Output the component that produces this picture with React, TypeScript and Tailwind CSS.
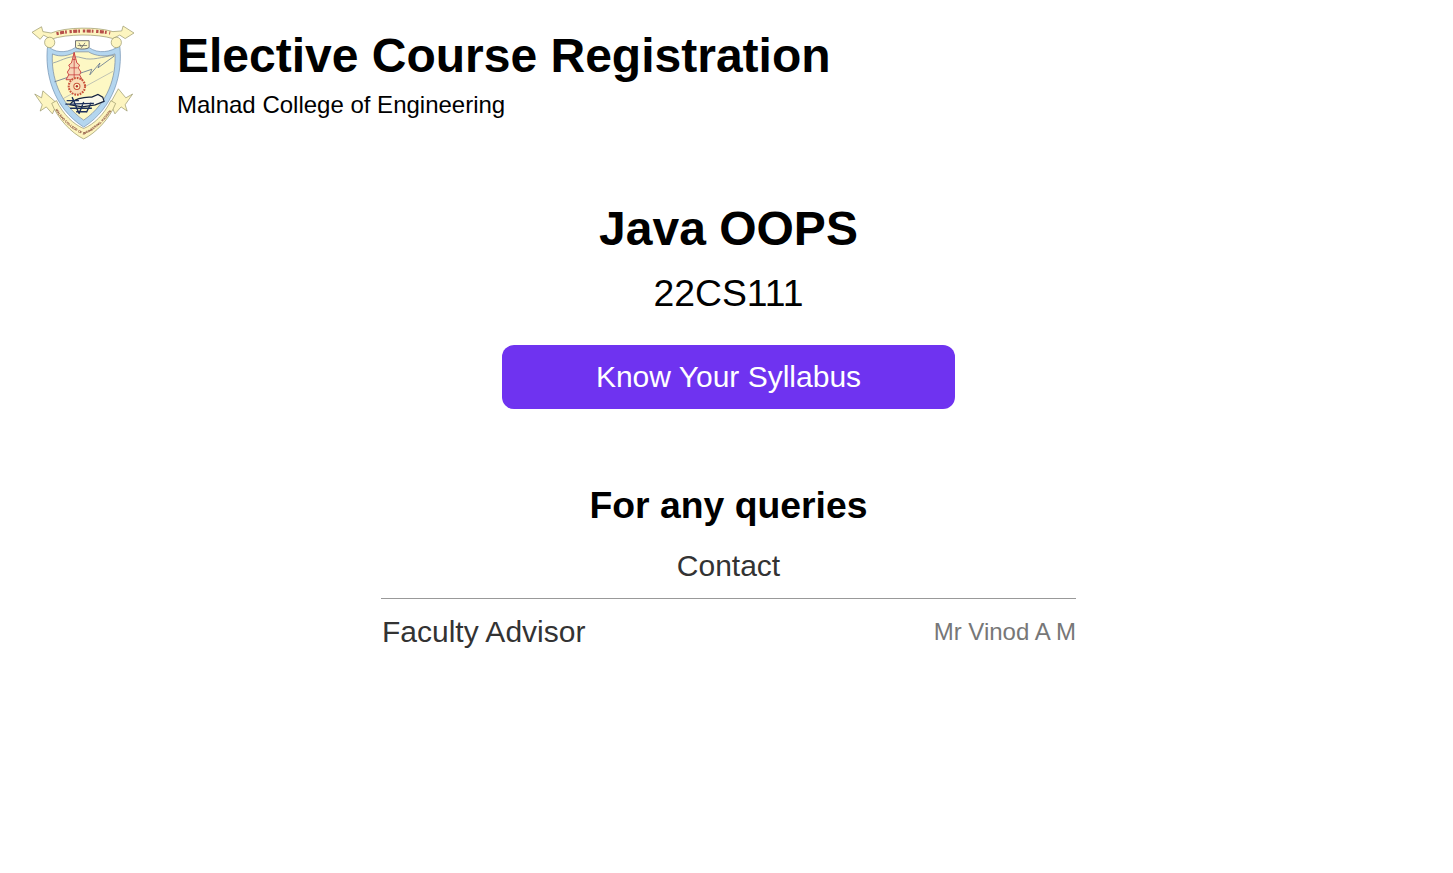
function Logo() {
  return (
    <svg width="104" height="115" viewBox="35 33 306 330" preserveAspectRatio="none" className="shrink-0">
      <defs>
        <filter id="soft" x="-5%" y="-5%" width="110%" height="110%">
          <feGaussianBlur stdDeviation="1.2" />
        </filter>
        <path id="band" d="M104 272 C125 308 160 336 190 348 C220 336 255 308 276 272" />
      </defs>
      <g filter="url(#soft)">
        {/* lower ribbon tails */}
        <path d="M46 231 L66 242 L70 222 L112 258 L98 288 L80 268 L62 280 L68 262 Z" fill="#fdf5c0" stroke="#8b8a5c" strokeWidth="1.8" />
        <path d="M334 231 L314 242 L292 216 L268 258 L282 288 L300 268 L318 280 L312 262 Z" fill="#fdf5c0" stroke="#8b8a5c" strokeWidth="1.8" />
        {/* lower ribbon */}
        <path d="M96 258 C112 300 155 344 190 360 C225 344 268 300 284 258 L270 250 C250 290 220 318 190 330 C160 318 130 290 110 250 Z" fill="#fdf5c0" stroke="#8b8a5c" strokeWidth="1.8" />
        <text fontSize="9.5" fill="#7c3a2e" fontWeight="700" fontFamily="'Liberation Sans', sans-serif">
          <textPath href="#band" startOffset="2%">MALNAD COLLEGE OF ENGINEERING, HASSAN</textPath>
        </text>
        {/* shield */}
        <path d="M84 92 C100 112 138 116 165 98 L206 98 C232 116 270 112 296 92 C306 170 280 270 190 326 C100 270 74 170 84 92 Z" fill="#b4d6ef" stroke="#6f8fb0" strokeWidth="2" />
        <path d="M98 116 C120 126 146 122 166 110 L204 110 C224 122 254 126 282 116 C286 180 262 258 190 306 C118 258 94 180 98 116 Z" fill="#fdf8c4" stroke="#76879e" strokeWidth="2" />
        {/* hills and lightning */}
        <path d="M100 142 C130 134 150 116 188 128 C215 136 245 124 280 120" fill="none" stroke="#76879e" strokeWidth="2" />
        <path d="M104 196 L190 168 L214 160 L208 176 L238 142 L232 156 L280 122" fill="none" stroke="#64778f" strokeWidth="2.4" />
        <path d="M130 244 L276 166" fill="none" stroke="#8f98a4" strokeWidth="1.6" />
        {/* pylon */}
        <path d="M162 112 L154 142 L146 148 L150 156 L142 168 L146 176 L138 190 L186 190 L178 176 L182 168 L174 156 L178 148 L170 142 Z" fill="#f6d3b6" stroke="#c93b3b" strokeWidth="2.6" />
        <path d="M152 156 H172 M146 176 H178 M158 132 H166 M162 112 V190" stroke="#c93b3b" strokeWidth="2.2" />
        {/* gear */}
        <circle cx="170" cy="209" r="24" fill="#f9dfb8" stroke="#c9533b" strokeWidth="6" strokeDasharray="5 3" />
        <circle cx="170" cy="209" r="9" fill="#fdf8c4" stroke="#c9533b" strokeWidth="3" />
        <circle cx="170" cy="209" r="3.5" fill="#b32f2f" />
        {/* book */}
        <path d="M150 262 C158 246 190 238 214 240 L232 232 L246 240 L250 252 L224 262 L186 268 Z" fill="#fbf9ea" stroke="#15233f" strokeWidth="3.6" />
        <path d="M140 250 L176 250 M136 260 L220 258 M150 272 L214 272 M168 282 L200 282 M156 240 L176 286 M190 254 L176 288 M212 256 L198 284" stroke="#1a2f5c" strokeWidth="4" fill="none" />
        {/* crest */}
        <path d="M166 78 H206 V96 C206 104 166 104 166 96 Z" fill="#fdf8c4" stroke="#55555c" strokeWidth="2.4" />
        <path d="M176 84 L184 98 L194 84 M172 92 H200" stroke="#55555c" strokeWidth="2" fill="none" />
        {/* top scroll */}
        <path d="M38 54 L66 38 L70 52 L94 56 C140 38 230 38 276 52 L302 50 L306 36 L338 56 L312 72 L296 62 L276 72 C230 58 140 58 94 74 L72 62 L62 74 Z" fill="#fdf5c0" stroke="#8b8a5c" strokeWidth="1.8" />
        <circle cx="90" cy="83" r="15" fill="#fdf5c0" stroke="#8b8a5c" strokeWidth="1.8" />
        <circle cx="286" cy="83" r="15" fill="#fdf5c0" stroke="#8b8a5c" strokeWidth="1.8" />
        <path d="M110 58 C150 48 225 48 268 56" fill="none" stroke="#b74f4a" strokeWidth="9" strokeDasharray="7 4 12 3 5 8" />
      </g>
    </svg>
  );
}

export default function App() {
  return (
    <div className="min-h-[873px] bg-white text-black font-['Liberation_Sans',Arial,sans-serif]">
      <header className="flex items-start pl-[31px] pt-[25px] gap-[42px]">
        <Logo />
        <div className="pt-[2px]">
          <h1 className="text-5xl leading-[58px] font-bold">Elective Course Registration</h1>
          <p className="text-2xl leading-[28px] mt-[6px]">Malnad College of Engineering</p>
        </div>
      </header>
      <main className="flex flex-col items-center mt-[60px] pl-1">
        <h2 className="text-5xl leading-[58px] font-bold">Java OOPS</h2>
        <p className="text-[37.33px] leading-[46px] mt-[12px]">22CS111</p>
        <button className="mt-[29px] w-[453px] h-[64px] rounded-xl bg-[#6f33f0] text-white text-3xl">
          Know Your Syllabus
        </button>
        <h3 className="text-[37.33px] leading-[42px] font-bold mt-[75px]">For any queries</h3>
        <p className="text-3xl leading-[34px] text-[#333333] mt-[23px]">Contact</p>
        <div className="w-[695px] mt-[15px] border-t border-[#999999] flex items-center justify-between pt-[16px] pl-[1px]">
          <span className="text-3xl leading-[34px] text-[#333333]">Faculty Advisor</span>
          <span className="text-2xl leading-[28px] text-[#777777]">Mr Vinod A M</span>
        </div>
      </main>
    </div>
  );
}
